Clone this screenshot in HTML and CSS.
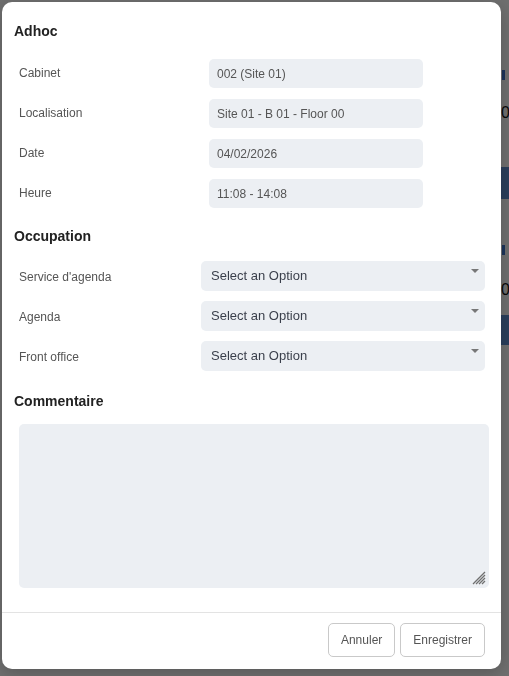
FILE: index.html
```html
<!DOCTYPE html>
<html lang="fr">
<head>
    <meta charset="UTF-8">
    <meta name="viewport" content="width=device-width, initial-scale=1.0">
    <title>Adhoc</title>
    <link rel="stylesheet" href="styles.css">
</head>
<body>
    <div class="page">
        <div class="pg-side"></div>
        <div class="pg-main">
            <div class="pg-mark"></div>
            <div class="pg-val">0</div>
            <div class="pg-btn"></div>
            <div class="pg-mark pg-m2"></div>
            <div class="pg-val pg-v2">0</div>
            <div class="pg-btn pg-b2"></div>
        </div>
    </div>

    <div class="overlay">
        <div class="modal">
            <div class="body">
                <h2>Adhoc</h2>
                <div class="fields">
                    <label>Cabinet</label>
                    <input class="ro" type="text" value="002 (Site 01)" readonly>
                    <label>Localisation</label>
                    <input class="ro" type="text" value="Site 01 - B 01 - Floor 00" readonly>
                    <label>Date</label>
                    <input class="ro" type="text" value="04/02/2026" readonly>
                    <label>Heure</label>
                    <input class="ro" type="text" value="11:08 - 14:08" readonly>
                </div>

                <h2 class="sec">Occupation</h2>
                <div class="fields sels">
                    <label>Service d'agenda</label>
                    <div class="sel">Select an Option</div>
                    <label>Agenda</label>
                    <div class="sel">Select an Option</div>
                    <label>Front office</label>
                    <div class="sel">Select an Option</div>
                </div>

                <h2 class="sec com">Commentaire</h2>
                <div class="txt-wrap">
                    <textarea class="txt"></textarea>
                    <svg class="grip" width="14" height="14" viewBox="0 0 14 14">
                        <path d="M13 1 L1 13 M13 4 L4 13 M13 7 L7 13 M13 10 L10 13" stroke="#6f6f6f" stroke-width="1.3"/>
                    </svg>
                </div>
            </div>
            <div class="foot">
                <button>Annuler</button>
                <button>Enregistrer</button>
            </div>
        </div>
    </div>
</body>
</html>
```

FILE: styles.css
```css
body {
    margin: 0;
    font-family: "Liberation Sans", Arial, sans-serif;
    background: #fafafa;
}

/* page behind the dialog */
.page {
    display: flex;
}

.pg-side {
    width: 495px;
    flex-shrink: 0;
}

.pg-main {
    flex: 1;
    padding-top: 70px;
}

.pg-mark {
    width: 3px;
    height: 10px;
    margin-left: 7px;
    background: #3d73c8;
}

.pg-val {
    color: #111;
    font-size: 16px;
    line-height: 22px;
    padding-left: 6px;
    margin-top: 22px;
}

.pg-btn {
    background: #5e8bcd;
    height: 32px;
    margin-top: 43px;
}

.pg-m2 {
    margin-top: 46px;
}

.pg-v2 {
    margin-top: 24px;
}

.pg-b2 {
    height: 30px;
    margin-top: 14px;
}

.overlay {
    position: fixed;
    inset: 0;
    background: rgba(0,0,0,0.56);
    padding: 2px;
}

.modal {
    width: 499px;
    background: white;
    border-radius: 10px;
    box-shadow: 0 4px 16px rgba(0,0,0,0.2);
}

.body {
    padding: 19px 12px 24px 12px;
}

h2 {
    margin: 0;
    font-size: 14px;
    line-height: 20px;
    font-weight: bold;
    color: #222;
}

.sec {
    margin-top: 18px;
}

.com {
    margin-top: 20px;
}

.fields {
    display: grid;
    grid-template-columns: 190px 214px;
    row-gap: 11px;
    align-items: center;
    margin-top: 18px;
    padding-left: 5px;
}

.fields label {
    font-size: 12px;
    color: #555;
    padding-bottom: 1px;
}

.ro {
    height: 29px;
    box-sizing: border-box;
    border: none;
    border-radius: 5px;
    background: #eceff3;
    padding: 0 8px;
    font-family: inherit;
    font-size: 12px;
    color: #555;
    outline: none;
}

.sels {
    grid-template-columns: 182px 284px;
    row-gap: 10px;
    margin-top: 15px;
}

.sels label {
    padding: 2px 0 0 0;
}

.sel {
    position: relative;
    height: 30px;
    line-height: 29px;
    border-radius: 5px;
    background: #eceff3;
    padding: 0 10px;
    font-size: 13px;
    color: #3a3f4b;
}

.sel::after {
    content: "";
    position: absolute;
    right: 6px;
    top: 8px;
    border-left: 4px solid transparent;
    border-right: 4px solid transparent;
    border-top: 4px solid #777;
}

.txt-wrap {
    position: relative;
    margin: 13px 0 0 5px;
    width: 470px;
}

.txt {
    display: block;
    width: 100%;
    height: 164px;
    box-sizing: border-box;
    border: none;
    border-radius: 5px;
    background: #eceff3;
    resize: none;
    outline: none;
    font-family: inherit;
}

.grip {
    position: absolute;
    right: 3px;
    bottom: 3px;
}

.foot {
    border-top: 1px solid #e3e3e3;
    padding: 10px 16px 12px 0;
    display: flex;
    justify-content: flex-end;
    gap: 5px;
}

button {
    height: 34px;
    padding: 0 12px;
    background: white;
    border: 1px solid #c9c9c9;
    border-radius: 5px;
    font-family: inherit;
    font-size: 12px;
    color: #555;
    cursor: pointer;
}
```
